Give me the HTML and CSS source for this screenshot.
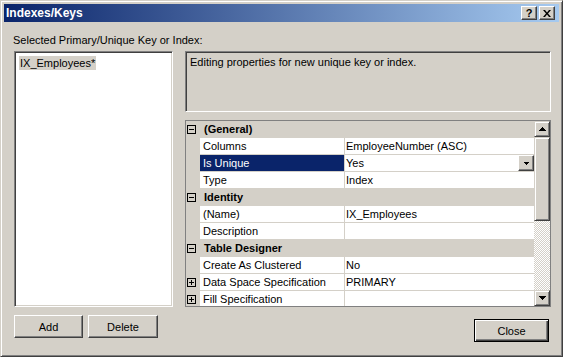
FILE: index.html
```html
<!DOCTYPE html>
<html>
  <head>
    <meta charset="utf-8" />
    <title>Indexes/Keys</title>
    <link rel="stylesheet" href="styles.css">
  </head>

  <body>
    <div class="window">
      <div class="titlebar">
        <span class="title">Indexes/Keys</span>
        <div class="caption-buttons">
          <div class="caption-btn help">?</div>
          <div class="caption-btn">
            <svg width="8" height="7" viewBox="0 0 8 7"><path d="M0 0h2l2 2.5L6 0h2L5 3.5L8 7H6L4 4.5L2 7H0l3-3.5z" fill="#000"/></svg>
          </div>
        </div>
      </div>

      <div class="content">
        <p class="label">Selected Primary/Unique Key or Index:</p>
        <div class="panes">
          <div class="left-pane">
            <ul class="key-list">
              <li class="selected">IX_Employees*</li>
            </ul>
            <div class="list-buttons">
              <div class="btn add">Add</div>
              <div class="btn delete">Delete</div>
            </div>
          </div>

          <div class="right-pane">
            <div class="description">Editing properties for new unique key or index.</div>

            <div class="prop-grid">
              <div class="rows">
                <div class="row category">
                  <span class="gutter"><svg width="9" height="9"><rect x="0.5" y="0.5" width="8" height="8" fill="none" stroke="#000"/><path d="M2 4.5h5" stroke="#000"/></svg></span>
                  <span class="cat-name">(General)</span>
                </div>
                <div class="row">
                  <span class="gutter"></span>
                  <span class="name">Columns</span>
                  <span class="value">EmployeeNumber (ASC)</span>
                </div>
                <div class="row active">
                  <span class="gutter"></span>
                  <span class="name">Is Unique</span>
                  <span class="value">Yes
                    <span class="drop-btn"><svg width="5" height="3"><path d="M0 0h5v1H0zM1 1h3v1H1zM2 2h1v1H2z" fill="#000"/></svg></span>
                  </span>
                </div>
                <div class="row">
                  <span class="gutter"></span>
                  <span class="name">Type</span>
                  <span class="value">Index</span>
                </div>
                <div class="row category">
                  <span class="gutter"><svg width="9" height="9"><rect x="0.5" y="0.5" width="8" height="8" fill="none" stroke="#000"/><path d="M2 4.5h5" stroke="#000"/></svg></span>
                  <span class="cat-name">Identity</span>
                </div>
                <div class="row">
                  <span class="gutter"></span>
                  <span class="name">(Name)</span>
                  <span class="value">IX_Employees</span>
                </div>
                <div class="row">
                  <span class="gutter"></span>
                  <span class="name">Description</span>
                  <span class="value"></span>
                </div>
                <div class="row category">
                  <span class="gutter"><svg width="9" height="9"><rect x="0.5" y="0.5" width="8" height="8" fill="none" stroke="#000"/><path d="M2 4.5h5" stroke="#000"/></svg></span>
                  <span class="cat-name">Table Designer</span>
                </div>
                <div class="row">
                  <span class="gutter"></span>
                  <span class="name">Create As Clustered</span>
                  <span class="value">No</span>
                </div>
                <div class="row">
                  <span class="gutter"><svg width="9" height="9"><rect x="0.5" y="0.5" width="8" height="8" fill="none" stroke="#000"/><path d="M2 4.5h5M4.5 2v5" stroke="#000"/></svg></span>
                  <span class="name">Data Space Specification</span>
                  <span class="value">PRIMARY</span>
                </div>
                <div class="row">
                  <span class="gutter"><svg width="9" height="9"><rect x="0.5" y="0.5" width="8" height="8" fill="none" stroke="#000"/><path d="M2 4.5h5M4.5 2v5" stroke="#000"/></svg></span>
                  <span class="name">Fill Specification</span>
                  <span class="value"></span>
                </div>
              </div>

              <div class="scrollbar">
                <div class="scroll-btn"><svg width="7" height="4"><path d="M3 0h1v1H3zM2 1h3v1H2zM1 2h5v1H1zM0 3h7v1H0z" fill="#000"/></svg></div>
                <div class="scroll-thumb"></div>
                <div class="scroll-track"></div>
                <div class="scroll-btn"><svg width="7" height="4"><path d="M0 0h7v1H0zM1 1h5v1H1zM2 2h3v1H2zM3 3h1v1H3z" fill="#000"/></svg></div>
              </div>
            </div>

            <div class="btn default">Close</div>
          </div>
        </div>
      </div>
    </div>
  </body>
</html>
```

FILE: styles.css
```css
* {
  margin: 0;
  padding: 0;
  box-sizing: border-box;
}
body {
  font-family: "Liberation Sans", Tahoma, sans-serif;
  font-size: 11px;
  color: #000;
  background: #d4d0c8;
}
ul li {
  list-style: none;
}
svg {
  display: block;
}
.window {
  width: 563px;
  height: 357px;
  padding: 3px;
  background: #d4d0c8;
  border: 1px solid;
  border-color: #d4d0c8 #404040 #404040 #d4d0c8;
  box-shadow: inset 1px 1px #fff, inset -1px -1px #808080;
}
.titlebar {
  height: 18px;
  display: flex;
  align-items: center;
  justify-content: space-between;
  padding: 0 4px 0 2px;
  background: linear-gradient(90deg, #0a246a, #a6caf0);
  color: #fff;
  font-weight: 700;
  font-size: 12px;
}
.caption-buttons {
  display: flex;
  gap: 2px;
}
.caption-btn {
  width: 16px;
  height: 14px;
  display: flex;
  align-items: center;
  justify-content: center;
  background: #d4d0c8;
  color: #000;
  border: 1px solid;
  border-color: #fff #404040 #404040 #fff;
  box-shadow: inset -1px -1px #808080;
  font-size: 11px;
  line-height: 12px;
}
.content {
  padding: 12px 8px 0 10px;
}
.label {
  line-height: 13px;
  margin-left: -1px;
}
.panes {
  display: flex;
  gap: 12px;
  margin-top: 4px;
}
.left-pane {
  width: 159px;
  display: flex;
  flex-direction: column;
}
.key-list {
  height: 256px;
  background: #fff;
  border: 1px solid;
  border-color: #808080 #fff #fff #808080;
  box-shadow: inset 1px 1px #404040, inset -1px -1px #d4d0c8;
  padding: 4px 0 0 4px;
}
.key-list li.selected {
  display: inline-block;
  background: #d4d0c8;
  line-height: 14px;
  padding: 0 1px;
}
.list-buttons {
  display: flex;
  gap: 5px;
  margin-top: 8px;
}
.btn {
  height: 23px;
  display: flex;
  align-items: center;
  justify-content: center;
  background: #d4d0c8;
  border: 1px solid;
  border-color: #fff #404040 #404040 #fff;
  box-shadow: inset -1px -1px #808080;
}
.add {
  width: 69px;
}
.delete {
  width: 70px;
}
.right-pane {
  width: 366px;
  display: flex;
  flex-direction: column;
}
.description {
  height: 61px;
  border: 1px solid;
  border-color: #808080 #fff #fff #808080;
  box-shadow: inset 1px 1px #404040, inset -1px -1px #d4d0c8;
  padding: 4px 4px;
  line-height: 13px;
}
.prop-grid {
  height: 187px;
  margin-top: 8px;
  border: 1px solid #808080;
  display: flex;
  overflow: hidden;
  background: #fff;
}
.rows {
  flex: 1;
  overflow: hidden;
}
.row {
  height: 17px;
  display: flex;
  border-bottom: 1px solid #d4d0c8;
  line-height: 16px;
}
.gutter {
  width: 14px;
  flex-shrink: 0;
  background: #d4d0c8;
  display: flex;
  align-items: center;
  padding-left: 1px;
}
.name {
  width: 144px;
  flex-shrink: 0;
  padding-left: 3px;
  white-space: nowrap;
}
.value {
  flex: 1;
  display: flex;
  justify-content: space-between;
  border-left: 1px solid #d4d0c8;
  padding-left: 1px;
}
.category {
  background: #d4d0c8;
}
.cat-name {
  font-weight: 700;
  padding-left: 4px;
}
.active .name {
  background: #0a246a;
  color: #fff;
}
.drop-btn {
  width: 16px;
  height: 16px;
  display: flex;
  align-items: center;
  justify-content: center;
  background: #d4d0c8;
  border: 1px solid;
  border-color: #fff #404040 #404040 #fff;
  box-shadow: inset -1px -1px #808080;
}
.scrollbar {
  width: 16px;
  display: flex;
  flex-direction: column;
}
.scroll-btn,
.scroll-thumb {
  background: #d4d0c8;
  border: 1px solid;
  border-color: #d4d0c8 #404040 #404040 #d4d0c8;
  box-shadow: inset 1px 1px #fff, inset -1px -1px #808080;
}
.scroll-btn {
  height: 16px;
  display: flex;
  align-items: center;
  justify-content: center;
}
.scroll-thumb {
  height: 84px;
}
.scroll-track {
  flex: 1;
  background: repeating-conic-gradient(#fff 0% 25%, #d4d0c8 0% 50%) 0 0 / 2px 2px;
}
.default {
  width: 75px;
  margin-top: 12px;
  margin-right: 2px;
  align-self: flex-end;
  border: 1px solid #000;
  box-shadow: inset 1px 1px #fff, inset -1px -1px #404040, inset -2px -2px #808080;
}
```
